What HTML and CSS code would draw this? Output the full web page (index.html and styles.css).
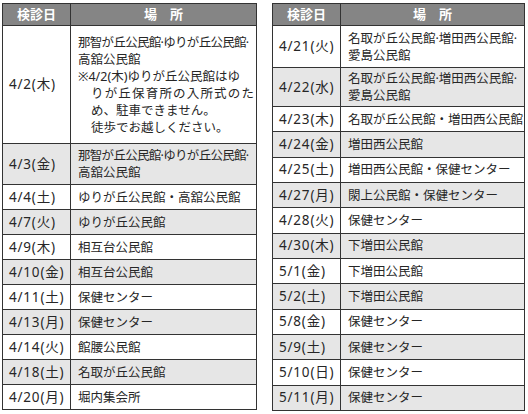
FILE: index.html
```html
<!DOCTYPE html>
<html lang="ja">
<head>
<meta charset="utf-8">
<link rel="stylesheet" href="styles.css">
</head>
<body>
<div class="wrap">
  <table class="sched left">
    <colgroup><col class="c-date"><col></colgroup>
    <thead><tr class="hd"><th>検診日</th><th>場　所</th></tr></thead>
    <tbody>
      <tr class="r-note"><td>4/2(木)</td><td>
        <div class="ln tight">那智が丘公民館·ゆりが丘公民館·</div>
        <div class="ln">高舘公民館</div>
        <div class="ln">※4/2(木)ゆりが丘公民館はゆ</div>
        <div class="ln ind just">りが丘保育所の入所式のた</div>
        <div class="ln ind">め、駐車できません。</div>
        <div class="ln ind">徒歩でお越しください。</div>
      </td></tr>
      <tr class="g r-two1"><td>4/3(金)</td><td><div class="ln tight">那智が丘公民館·ゆりが丘公民館·</div><div class="ln">高舘公民館</div></td></tr>
      <tr class="r1"><td>4/4(土)</td><td>ゆりが丘公民館・高舘公民館</td></tr>
      <tr class="g r1"><td>4/7(火)</td><td>ゆりが丘公民館</td></tr>
      <tr class="r1"><td>4/9(木)</td><td>相互台公民館</td></tr>
      <tr class="g r1"><td>4/10(金)</td><td>相互台公民館</td></tr>
      <tr class="r1"><td>4/11(土)</td><td>保健センター</td></tr>
      <tr class="g r1"><td>4/13(月)</td><td>保健センター</td></tr>
      <tr class="r1"><td>4/14(火)</td><td>館腰公民館</td></tr>
      <tr class="g r1"><td>4/18(土)</td><td>名取が丘公民館</td></tr>
      <tr class="r1"><td>4/20(月)</td><td>堀内集会所</td></tr>
    </tbody>
  </table>
  <table class="sched right">
    <colgroup><col class="c-date"><col></colgroup>
    <thead><tr class="hd"><th>検診日</th><th>場　所</th></tr></thead>
    <tbody>
      <tr class="r-two2"><td>4/21(火)</td><td><div class="ln">名取が丘公民館·増田西公民館·</div><div class="ln">愛島公民館</div></td></tr>
      <tr class="g r-two3"><td>4/22(水)</td><td><div class="ln">名取が丘公民館·増田西公民館·</div><div class="ln">愛島公民館</div></td></tr>
      <tr class="r2"><td>4/23(木)</td><td>名取が丘公民館・増田西公民館</td></tr>
      <tr class="g r2"><td>4/24(金)</td><td>増田西公民館</td></tr>
      <tr class="r2"><td>4/25(土)</td><td>増田西公民館・保健センター</td></tr>
      <tr class="g r2"><td>4/27(月)</td><td>閖上公民館・保健センター</td></tr>
      <tr class="r2"><td>4/28(火)</td><td>保健センター</td></tr>
      <tr class="g r2"><td>4/30(木)</td><td>下増田公民館</td></tr>
      <tr class="r2"><td>5/1(金)</td><td>下増田公民館</td></tr>
      <tr class="g r2"><td>5/2(土)</td><td>下増田公民館</td></tr>
      <tr class="r2"><td>5/8(金)</td><td>保健センター</td></tr>
      <tr class="g r2"><td>5/9(土)</td><td>保健センター</td></tr>
      <tr class="r2"><td>5/10(日)</td><td>保健センター</td></tr>
      <tr class="g r2"><td>5/11(月)</td><td>保健センター</td></tr>
    </tbody>
  </table>
</div>
</body>
</html>
```
FILE: styles.css
```css
html, body {
  margin: 0;
  padding: 0;
  background: #ffffff;
}
body {
  font-family: "Noto Sans", "Noto Sans CJK JP", sans-serif;
  color: #262626;
  font-size: 12.5px;
}
.wrap {
  display: flex;
  align-items: flex-start;
  gap: 15px;
  padding: 3px 0 0 2px;
}
.sched {
  border-collapse: collapse;
  table-layout: fixed;
}
.left { width: 255px; }
.right { width: 253px; }
.c-date { width: 68px; }
.sched th, .sched td {
  border: 1px solid #333333;
  padding: 0 0 0 6px;
  line-height: 17px;
  text-align: left;
  vertical-align: middle;
  white-space: nowrap;
  overflow: hidden;
}
.sched td:first-child {
  font-size: 13.5px;
  letter-spacing: 0.8px;
}
.sched td + td { padding-left: 7px; }
.sched th {
  background: #858585;
  color: #ffffff;
  font-weight: bold;
  font-size: 13px;
  text-align: center;
  padding: 0;
}
.hd { height: 22px; }
.g td { background: #e6e6e6; }
.r-note { height: 118px; }
.r-two1 { height: 41px; }
.r1 { height: 25px; }
.r-two2 { height: 42px; }
.r-two3 { height: 39px; }
.r2 { height: 25.33px; }
.ln { display: block; }
.tight { letter-spacing: -0.7px; }
.ind { padding-left: 13px; }
.just {
  text-align: justify;
  text-align-last: justify;
  padding-right: 2px;
}
```
